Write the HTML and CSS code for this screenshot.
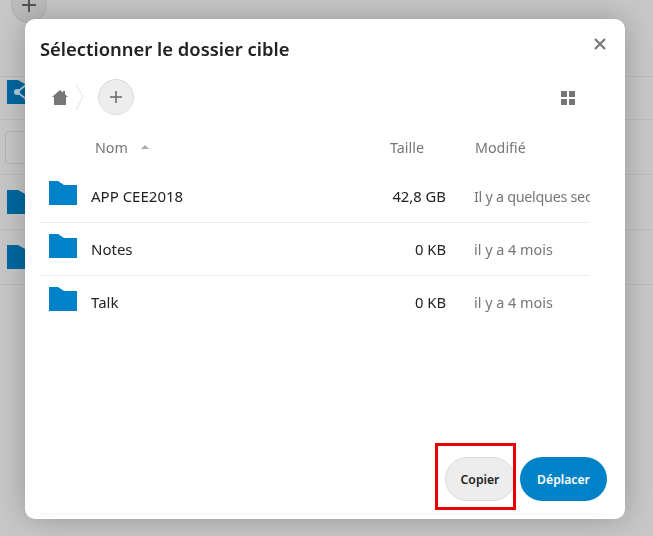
FILE: index.html
```html
<!DOCTYPE html>
<html lang="fr">
<head>
<meta charset="utf-8">
<title>Sélectionner le dossier cible</title>
<link rel="stylesheet" href="styles.css">
</head>
<body>
<div class="page">
  <div class="page-top"><span class="page-add"><svg width="14" height="14" viewBox="0 0 14 14"><path d="M6 0h2v6h6v2H8v6H6V8H0V6h6z" fill="#555"/></svg></span></div>
  <div class="page-row page-row-share">
    <svg class="page-folder" width="29" height="24" viewBox="0 0 29 24"><path d="M0 0h11l7 4h11v20H0z" fill="#0068a0"/><path d="M10 12l9-7M10 12l9 7" stroke="#b5cfdf" stroke-width="1.6" fill="none"/><circle cx="10" cy="12" r="3" fill="#b5cfdf"/></svg>
  </div>
  <div class="page-row page-row-input"><span class="page-input"></span></div>
  <div class="page-row"><svg class="page-folder" width="29" height="24" viewBox="0 0 29 24"><path d="M0 0h11l7 4h11v20H0z" fill="#0068a0"/></svg></div>
  <div class="page-row"><svg class="page-folder" width="29" height="24" viewBox="0 0 29 24"><path d="M0 0h11l7 4h11v20H0z" fill="#0068a0"/></svg></div>
</div>

<div class="modal">
  <div class="modal-head">
    <h2 class="modal-title">Sélectionner le dossier cible</h2>
    <svg class="modal-close" width="12" height="12" viewBox="0 0 12 12"><path d="M1 1l10 10M11 1L1 11" stroke="#757575" stroke-width="2" fill="none"/></svg>
  </div>
  <div class="crumbs">
    <svg class="crumb-home" width="16" height="15" viewBox="0 0 16 15"><path d="M8 0l3 2.6V1h2v3.3L16 7h-2v8H2V7H0z" fill="#767676"/></svg>
    <svg class="crumb-sep" width="10" height="28" viewBox="0 0 10 28"><path d="M1 1l7 13-7 13" stroke="#e4e4e4" stroke-width="1" fill="none"/></svg>
    <span class="crumb-add"><svg width="12" height="12" viewBox="0 0 12 12"><path d="M5.25 0h1.5v5.25H12v1.5H6.75V12h-1.5V6.75H0v-1.5h5.25z" fill="#666"/></svg></span>
    <svg class="crumb-grid" width="14" height="14" viewBox="0 0 14 14"><path d="M0 0h6v6H0zM8 0h6v6H8zM0 8h6v6H0zM8 8h6v6H8z" fill="#757575"/></svg>
  </div>
  <div class="list">
    <div class="list-head">
      <span class="col-name">Nom<svg class="sort" width="8" height="4" viewBox="0 0 8 4"><path d="M4 0l4 4H0z" fill="#aaa"/></svg></span>
      <span class="col-size">Taille</span>
      <span class="col-date">Modifié</span>
    </div>
    <div class="list-row">
      <svg class="folder" width="28" height="24" viewBox="0 0 28 24"><path d="M0 0h9l6 4h13v20H0z" fill="#0082c9"/></svg>
      <span class="cell-name">APP CEE2018</span>
      <span class="cell-size">42,8 GB</span>
      <span class="cell-date cell-date-long">Il y a quelques secondes</span>
    </div>
    <div class="list-row">
      <svg class="folder" width="28" height="24" viewBox="0 0 28 24"><path d="M0 0h9l6 4h13v20H0z" fill="#0082c9"/></svg>
      <span class="cell-name">Notes</span>
      <span class="cell-size">0 KB</span>
      <span class="cell-date">il y a 4 mois</span>
    </div>
    <div class="list-row list-row-last">
      <svg class="folder" width="28" height="24" viewBox="0 0 28 24"><path d="M0 0h9l6 4h13v20H0z" fill="#0082c9"/></svg>
      <span class="cell-name">Talk</span>
      <span class="cell-size">0 KB</span>
      <span class="cell-date">il y a 4 mois</span>
    </div>
  </div>
  <div class="actions">
    <button class="btn btn-copy">Copier</button>
    <button class="btn btn-move">Déplacer</button>
  </div>
  <div class="foot-line"></div>
</div>
<div class="highlight"></div>
</body>
</html>
```
FILE: styles.css
```css
* { box-sizing: border-box; }
html, body { margin: 0; height: 100%; overflow: hidden; }
body {
  background: #c8c8c8;
  font-family: "Noto Sans", "Open Sans", sans-serif;
  font-size: 14px;
  color: #222;
}
.page { height: 536px; }
.page-top { display: flex; align-items: flex-start; height: 77px; padding-left: 11px; border-bottom: 1px solid #bdbdbd; }
.page-add { display: flex; align-items: center; justify-content: center; width: 36px; height: 36px; margin-top: -13px; border-radius: 50%; background: #bcbcbc; border: 1px solid #b2b2b2; }
.page-row { height: 55px; border-bottom: 1px solid #bdbdbd; padding: 15px 0 0 7px; }
.page-row-share { height: 43px; padding-top: 3px; }
.page-row-input { padding: 11px 0 0 5px; }
.page-input { display: block; width: 40px; height: 33px; border: 1px solid #b5b5b5; border-radius: 3px; }
.page-folder { display: block; }

.modal {
  position: fixed; left: 25px; top: 19px;
  width: 600px; height: 500px;
  background: #fff; border-radius: 10px;
  box-shadow: 0 0 30px rgba(0,0,0,.25);
  display: flex; flex-direction: column;
  padding: 0 18px 5px 15px;
}
.modal-head { display: flex; align-items: center; justify-content: space-between; height: 48px; padding-top: 12px; }
.modal-title { margin: 0; font-size: 18.4px; font-weight: 600; color: #222; line-height: 36px; }
.modal-close { margin-top: -11px; margin-right: 1px; }
.crumbs { display: flex; align-items: center; height: 36px; margin-top: 12px; padding-left: 12px; }
.crumb-sep { margin-left: 7px; }
.crumb-add { display: flex; align-items: center; justify-content: center; width: 36px; height: 36px; margin-left: 13px; border-radius: 50%; background: #ededed; border: 1px solid #dbdbdb; }
.crumb-grid { margin: 2px 32px 0 auto; }
.list { width: 550px; margin-top: 14px; }
.list-head { display: flex; align-items: center; height: 41px; color: #767676; padding-bottom: 5px; font-size: 14.3px; }
.col-name { width: 350px; padding-left: 55px; display: flex; align-items: center; }
.sort { margin-left: 13px; }
.col-size { width: 85px; }
.col-date { flex: 1; }
.list-row { display: flex; align-items: center; height: 53px; border-bottom: 1px solid #ededed; white-space: nowrap; overflow: hidden; }
.list-row-last { border-bottom-color: transparent; }
.folder { margin: -6px 0 0 9px; flex: none; }
.cell-name { margin-left: 14px; width: 300px; flex: none; font-size: 15px; }
.cell-size { width: 55px; text-align: right; flex: none; font-size: 14.8px; }
.cell-date { margin-left: 28px; color: #767676; flex: none; font-size: 14.4px; }
.cell-date-long { letter-spacing: -.3px; }
.actions { margin-top: auto; display: flex; justify-content: flex-end; gap: 5px; }
.btn { height: 44px; border-radius: 22px; font: 600 12.2px "Noto Sans", sans-serif; padding: 0; }
.btn-copy { width: 70px; background: #ededed; border: 1px solid #dbdbdb; color: #222; }
.btn-move { width: 87px; background: #0082c9; border: 0; color: #fff; }
.foot-line { height: 1px; margin-top: 12px; background: #f2f2f2; }
.highlight { position: fixed; left: 435px; top: 443px; width: 81px; height: 67px; border: 3px solid #e60000; }
```
